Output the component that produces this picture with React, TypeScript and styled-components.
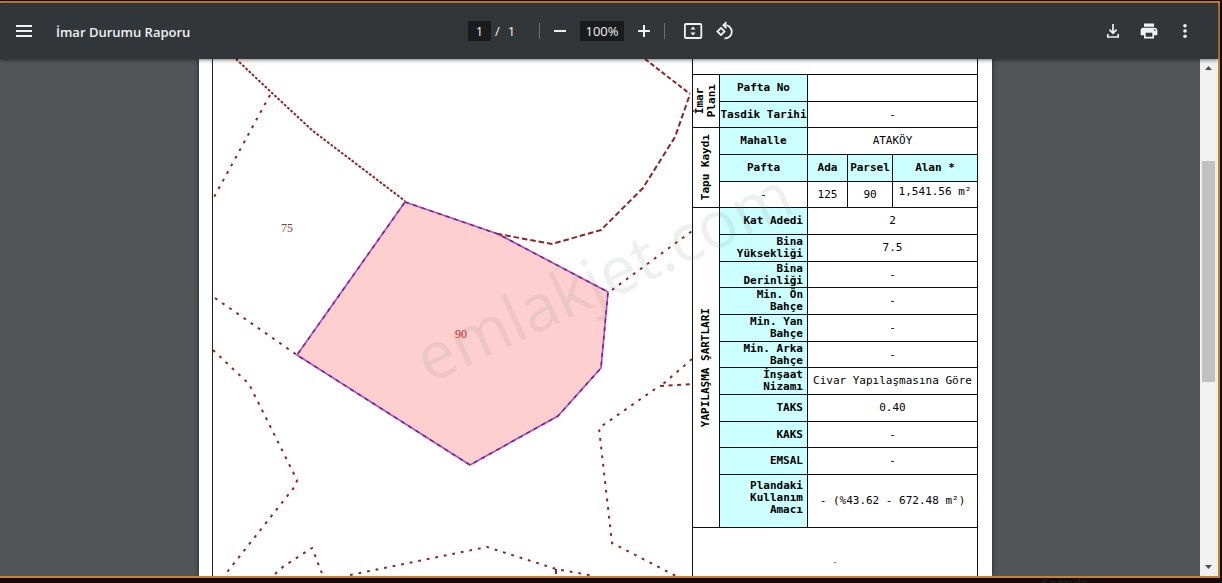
import React from "react";
import styled, { createGlobalStyle } from "styled-components";

const GlobalStyle = createGlobalStyle`
  *, *::before, *::after { box-sizing: border-box; }
  body {
    margin: 0;
    background: #150b0b;
    font-family: "Open Sans", "Noto Sans", sans-serif;
  }
`;

const Desktop = styled.div`
  height: 100vh;
  display: flex;
  flex-direction: column;
  overflow: hidden;
  padding: 1px 2px 0 0;
`;

const Viewer = styled.main`
  flex: 1;
  min-height: 0;
  display: flex;
  flex-direction: column;
  border: 2px solid #c6822f;
  border-left: 0;
  background: #525659;
`;

const Behind = styled.div`
  flex: none;
  height: 5px;
  overflow: hidden;
  padding-right: 132px;
  text-align: right;
  font-size: 13px;
  line-height: 10px;
  color: #12282c;
`;

/* ---------- toolbar ---------- */

const Toolbar = styled.header`
  position: relative;
  z-index: 2;
  flex: none;
  height: 56px;
  display: grid;
  grid-template-columns: 1fr auto 1fr;
  align-items: center;
  padding: 0 23px 0 8px;
  background: #323639;
  color: #f1f1f1;
  box-shadow: 0 1px 4px rgba(0, 0, 0, 0.55);
`;

const ToolStart = styled.div`
  display: flex;
  align-items: center;
  gap: 22px;
  padding-left: 6px;
`;

const ToolCenter = styled.div`
  display: flex;
  align-items: center;
  gap: 10px;
`;

const ToolEnd = styled.div`
  display: flex;
  align-items: center;
  justify-content: flex-end;
  gap: 16px;
`;

const Title = styled.h1`
  margin: 0;
  padding-top: 2px;
  font-size: 13px;
  line-height: 20px;
  font-weight: 600;
  white-space: nowrap;
`;

const IconButton = styled.button`
  width: 20px;
  height: 20px;
  padding: 0;
  border: 0;
  background: none;
  color: inherit;
  display: block;
  svg { display: block; }
`;

const Divider = styled.span`
  width: 1px;
  height: 16px;
  background: #6b6e70;
`;

const PageInfo = styled.div`
  width: 61px;
  display: flex;
  align-items: center;
  gap: 4px;
  font-size: 13px;
  line-height: 20px;
`;

const Field = styled.input<{ $width: number }>`
  width: ${(p) => p.$width}px;
  height: 20px;
  padding: 0;
  border: 0;
  background: #191b1c;
  color: inherit;
  font: inherit;
  font-size: 13px;
  text-align: center;
`;

const Slash = styled.span`
  margin-right: 4px;
`;

const FitTools = styled.div`
  display: flex;
  gap: 12px;
  padding-left: 8px;
`;

/* ---------- document area ---------- */

const Stage = styled.div`
  flex: 1;
  min-height: 0;
  display: flex;
`;

const Scroller = styled.div`
  flex: 1;
  min-width: 0;
  overflow: hidden;
  display: flex;
  justify-content: center;
  padding-right: 9px;
`;

const Paper = styled.article`
  position: relative;
  flex: none;
  display: flex;
  padding: 0 14px 0 13px;
  background: #fff;
  color: #000;
  overflow: hidden;
  box-shadow: 0 0 5px rgba(0, 0, 0, 0.6);
`;

const MapPane = styled.section`
  width: 480px;
  border-left: 1px solid #222;
  svg { display: block; width: 100%; }
`;

const DataPane = styled.section`
  width: 286px;
  border: 1px solid #111;
  border-width: 0 1px;
  display: flex;
  flex-direction: column;
  font-family: "DejaVu Sans Mono", monospace;
  font-size: 11px;
  line-height: 12px;
`;

const HeadSpace = styled.div`
  height: 15px;
`;

const Notes = styled.div`
  flex: 1;
  padding-top: 28px;
  text-align: center;
  font-size: 10px;
  color: #777;
`;

const Table = styled.table`
  width: 100%;
  table-layout: fixed;
  border-collapse: separate;
  border-spacing: 0;
  border-top: 1px solid #111;
`;

const Row = styled.tr<{ $tall?: boolean }>`
  height: ${(p) => (p.$tall ? 53 : 27)}px;
  &:nth-child(3n + 2) { height: 26px; }
`;

const cellBorder = `
  padding: 0;
  border: solid #111;
  border-width: 0 1px 1px 0;
  &:last-child { border-right-width: 0; }
`;

const Section = styled.th`
  ${cellBorder}
  &:last-child { border-right-width: 1px; }
`;

const Vertical = styled.span`
  display: inline-block;
  writing-mode: vertical-rl;
  transform: rotate(180deg);
  white-space: nowrap;
  vertical-align: middle;
`;

const Label = styled.th<{ $right?: boolean; $raised?: boolean }>`
  ${cellBorder}
  background: #ccffff;
  text-align: ${(p) => (p.$right ? "right" : "center")};
  padding-right: ${(p) => (p.$right ? 4 : 0)}px;
  padding-bottom: ${(p) => (p.$raised ? 6 : 0)}px;
  white-space: nowrap;
`;

const Value = styled.td<{ $top?: boolean }>`
  ${cellBorder}
  text-align: center;
  vertical-align: ${(p) => (p.$top ? "top" : "middle")};
  padding-top: ${(p) => (p.$top ? 4 : 0)}px;
  white-space: nowrap;
`;

const Watermark = styled.div`
  position: absolute;
  left: 404px;
  top: 216px;
  transform: translate(-50%, -50%) rotate(-25deg);
  font-size: 65px;
  line-height: 64px;
  color: rgba(120, 130, 130, 0.13);
  pointer-events: none;
  white-space: nowrap;
`;

/* ---------- scroll bar ---------- */

const ScrollBar = styled.div`
  flex: none;
  width: 18px;
  display: flex;
  flex-direction: column;
  align-items: center;
  padding: 0 3px 0 2px;
  background: #f1f1f1;
`;

const Arrow = styled.svg`
  flex: none;
  display: block;
  width: 13px;
  height: 17px;
`;

const Gap = styled.div<{ $grow: number }>`
  flex: ${(p) => p.$grow} 1 0;
`;

const Thumb = styled.div`
  flex: 221 1 0;
  width: 13px;
  background: #c1c1c1;
`;

const conditions: [string[], string][] = [
  [["Bina", "Yüksekliği"], "7.5"],
  [["Bina", "Derinliği"], "-"],
  [["Min. Ön", "Bahçe"], "-"],
  [["Min. Yan", "Bahçe"], "-"],
  [["Min. Arka", "Bahçe"], "-"],
  [["İnşaat", "Nizamı"], "Civar Yapılaşmasına Göre"],
  [["TAKS"], "0.40"],
  [["KAKS"], "-"],
  [["EMSAL"], "-"],
  [["Plandaki", "Kullanım", "Amacı"], "- (%43.62 - 672.48 m²)"],
];

const parcel = "405,202 498,234 608,292 601,368 558,416 470,465 297,355";

function Lines({ lines }: { lines: string[] }) {
  return (
    <>
      {lines.map((text, i) => (
        <React.Fragment key={text}>
          {i > 0 && <br />}
          {text}
        </React.Fragment>
      ))}
    </>
  );
}

function ParcelMap() {
  return (
    <svg viewBox="213 59 479 517" role="img" aria-label="Parsel haritası">
      <polygon points={parcel} fill="#fdcfcf" stroke="#ad4fd0" strokeWidth="1.7" />
      <g fill="none" stroke="#8c2626" strokeWidth="2">
        <polygon points={parcel} stroke="#7a2470" strokeWidth="1.5" strokeDasharray="4 4.6" />
        <path d="M236 59L271 92L313 131L405 201" strokeDasharray="2.7 1.7" />
        <path d="M645 59L690 94" strokeDasharray="4.6 2.4" />
        <path d="M689 97L675 137L643 188L601 230L552 244L498 234" strokeDasharray="5.6 2.9" />
        <g strokeDasharray="2.8 5.9">
          <path d="M270 95L213 199" />
          <path d="M215 298L297 355" />
          <path d="M213 350L249 384L297 480L296 485L224 576" />
          <path d="M275 574L284 566L312 548L323 576" />
          <path d="M350 575L487 547L556 569L594 576" />
          <path d="M692 359L663 384" />
          <path d="M655 389L599 428L612 543L676 576" />
          <path d="M612 290L692 231" />
        </g>
        <path d="M660 386L692 384" strokeDasharray="4 4.6" />
        <path d="M556 569V574" />
      </g>
      <g fontFamily="Liberation Serif, serif" fontSize="12" textAnchor="middle">
        <text x="287" y="232" fill="#8c3a30">75</text>
        <text x="461" y="338" fill="#d02020">90</text>
      </g>
    </svg>
  );
}

export default function App() {
  return (
    <Desktop>
      <GlobalStyle />
      <Viewer>
        <Toolbar>
          <ToolStart>
            <IconButton aria-label="Menü">
              <svg width="20" height="20" viewBox="0 0 20 20" fill="currentColor">
                <path d="M2 4h16v2H2zM2 9h16v2H2zM2 14h16v2H2z" />
              </svg>
            </IconButton>
            <Title>İmar Durumu Raporu</Title>
          </ToolStart>
          <ToolCenter>
            <PageInfo>
              <Field $width={23} aria-label="Sayfa" defaultValue="1" />
              <Slash>/</Slash>
              <span>1</span>
            </PageInfo>
            <Divider />
            <IconButton aria-label="Uzaklaştır">
              <svg width="20" height="20" viewBox="0 0 20 20" fill="currentColor">
                <path d="M4 9h12v2H4z" />
              </svg>
            </IconButton>
            <Field $width={44} aria-label="Yakınlaştırma" defaultValue="100%" />
            <IconButton aria-label="Yakınlaştır">
              <svg width="20" height="20" viewBox="0 0 20 20" fill="currentColor">
                <path d="M9 4h2v5h5v2h-5v5H9v-5H4V9h5z" />
              </svg>
            </IconButton>
            <Divider />
            <FitTools>
              <IconButton aria-label="Sayfaya sığdır">
                <svg width="20" height="20" viewBox="0 0 20 20" fill="none">
                  <rect x="1.9" y="3" width="16.4" height="14" rx="1" stroke="currentColor" strokeWidth="1.8" />
                  <path d="M10 5.4l2.6 3H7.4zM10 14.6l2.6-3H7.4z" fill="currentColor" />
                </svg>
              </IconButton>
              <IconButton aria-label="Sola döndür">
                <svg width="20" height="20" viewBox="0 0 20 20" fill="none" stroke="currentColor" strokeWidth="1.8">
                  <path d="M6 6.9L9.6 10.5L6 14.1L2.4 10.5z" />
                  <path d="M9.4 4.2a6.6 6.6 0 1 1 0 13.1" />
                  <path d="M11.4 1.2L8.4 4.2l3 3" />
                </svg>
              </IconButton>
            </FitTools>
          </ToolCenter>
          <ToolEnd>
            <IconButton aria-label="İndir">
              <svg width="20" height="20" viewBox="0 0 20 20" fill="none" stroke="currentColor" strokeWidth="1.7">
                <path d="M10 3v9M6.4 8.6L10 12.2l3.6-3.6M4.8 13v3h10.4v-3" />
              </svg>
            </IconButton>
            <IconButton aria-label="Yazdır">
              <svg width="20" height="20" viewBox="0 0 24 24" fill="currentColor">
                <path d="M19 8H5c-1.66 0-3 1.34-3 3v6h4v4h12v-4h4v-6c0-1.66-1.34-3-3-3zm-3 11H8v-5h8v5zm3-7c-.55 0-1-.45-1-1s.45-1 1-1 1 .45 1 1-.45 1-1 1zm-1-9H6v4h12V3z" />
              </svg>
            </IconButton>
            <IconButton aria-label="Diğer işlemler">
              <svg width="20" height="20" viewBox="0 0 20 20" fill="currentColor">
                <circle cx="10" cy="4.8" r="1.8" />
                <circle cx="10" cy="10" r="1.8" />
                <circle cx="10" cy="15.2" r="1.8" />
              </svg>
            </IconButton>
          </ToolEnd>
        </Toolbar>

        <Stage>
          <Scroller>
            <Paper>
              <MapPane>
                <ParcelMap />
              </MapPane>
              <DataPane>
                <HeadSpace />
                <Table>
                  <colgroup>
                    <col style={{ width: 27 }} />
                    <col style={{ width: 88 }} />
                    <col style={{ width: 40 }} />
                    <col style={{ width: 45 }} />
                    <col />
                  </colgroup>
                  <tbody>
                    <Row>
                      <Section rowSpan={2} scope="rowgroup">
                        <Vertical>
                          <Lines lines={["İmar", "Planı"]} />
                        </Vertical>
                      </Section>
                      <Label scope="row">Pafta No</Label>
                      <Value colSpan={3} />
                    </Row>
                    <Row>
                      <Label scope="row">Tasdik Tarihi</Label>
                      <Value colSpan={3}>-</Value>
                    </Row>
                    <Row>
                      <Section rowSpan={3} scope="rowgroup">
                        <Vertical>Tapu Kaydı</Vertical>
                      </Section>
                      <Label scope="row">Mahalle</Label>
                      <Value colSpan={3}>ATAKÖY</Value>
                    </Row>
                    <Row>
                      <Label scope="col">Pafta</Label>
                      <Label scope="col">Ada</Label>
                      <Label scope="col">Parsel</Label>
                      <Label scope="col">Alan *</Label>
                    </Row>
                    <Row>
                      <Value>-</Value>
                      <Value>125</Value>
                      <Value>90</Value>
                      <Value $top>1,541.56 m²</Value>
                    </Row>
                    <Row>
                      <Section rowSpan={11} scope="rowgroup">
                        <Vertical>YAPILAŞMA ŞARTLARI</Vertical>
                      </Section>
                      <Label $right scope="row">Kat Adedi</Label>
                      <Value colSpan={3}>2</Value>
                    </Row>
                    {conditions.map(([lines, value]) => (
                      <Row key={lines.join(" ")} $tall={lines.length > 2}>
                        <Label $right $raised={lines.length > 2} scope="row">
                          <Lines lines={lines} />
                        </Label>
                        <Value colSpan={3}>{value}</Value>
                      </Row>
                    ))}
                  </tbody>
                </Table>
                <Notes>-</Notes>
              </DataPane>
              <Watermark>emlakjet.com</Watermark>
            </Paper>
          </Scroller>
          <ScrollBar aria-hidden="true">
            <Arrow viewBox="0 0 13 17">
              <path d="M3 11l3.5-4 3.5 4z" fill="#505050" />
            </Arrow>
            <Gap $grow={85} />
            <Thumb />
            <Gap $grow={177} />
            <Arrow viewBox="0 0 13 17">
              <path d="M3 6l3.5 4L10 6z" fill="#505050" />
            </Arrow>
          </ScrollBar>
        </Stage>
      </Viewer>
      <Behind aria-hidden="true">Sorgula</Behind>
    </Desktop>
  );
}
